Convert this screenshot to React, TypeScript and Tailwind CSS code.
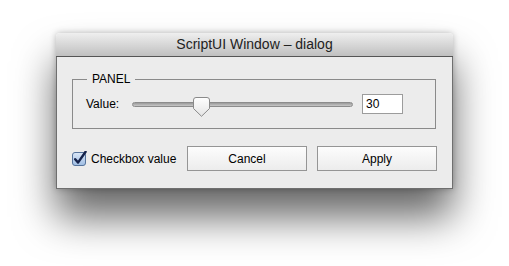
import React from "react";

function SliderThumb() {
  return (
    <svg width="17" height="20" viewBox="0 0 17 20" className="absolute left-[60px] top-[-6px]">
      <defs>
        <linearGradient id="thumb" x1="0" y1="0" x2="0" y2="1">
          <stop offset="0" stopColor="#ffffff" />
          <stop offset="1" stopColor="#e4e4e4" />
        </linearGradient>
      </defs>
      <path
        d="M3 0.5 H14 Q16.5 0.5 16.5 3 V11.5 L8.5 19.3 L0.5 11.5 V3 Q0.5 0.5 3 0.5 Z"
        fill="url(#thumb)"
        stroke="#8a8a8a"
        strokeWidth="1"
      />
    </svg>
  );
}

function CheckIcon() {
  return (
    <svg width="16" height="16" viewBox="0 0 16 16">
      <defs>
        <linearGradient id="box" x1="0" y1="0" x2="0" y2="1">
          <stop offset="0" stopColor="#dbe7f7" />
          <stop offset="1" stopColor="#9fbde3" />
        </linearGradient>
      </defs>
      <rect x="0.5" y="1.5" width="13" height="13" rx="2.5" fill="url(#box)" stroke="#56739b" />
      <path d="M3.2 8.2 L6 11.6 L13.6 0.8" fill="none" stroke="#15224a" strokeWidth="2.4" strokeLinecap="round" strokeLinejoin="round" />
    </svg>
  );
}

export default function App() {
  return (
    <div className="w-[509px] h-[266px] bg-white pt-[33px] pl-[56px] font-['Liberation_Sans',Arial,sans-serif] text-black">
      <div className="w-[397px] rounded-t-[4px] shadow-[0_0_6px_rgba(0,0,0,0.25),0_28px_40px_0_rgba(0,0,0,0.6)]">
        <div className="h-[24px] rounded-t-[4px] bg-gradient-to-b from-[#efefef] to-[#c0c0c0] border-b border-[#555] flex items-center justify-center text-[14px] text-[#222]">
          ScriptUI Window – dialog
        </div>
        <div className="bg-[#ececec] border-x border-b border-[#6f6f6f] pt-[22px] pb-[17px] px-[15px]">
          <div className="relative w-[364px] h-[50px] border border-[#8a8a8a] flex items-center pl-[13px]">
            <span className="absolute left-[14px] top-[-8px] bg-[#ececec] px-[5px] text-[12px] leading-[14px]">
              PANEL
            </span>
            <span className="text-[12px] w-[46px] mt-[-1px]">Value:</span>
            <div className="relative w-[221px] h-[5px] rounded-full bg-gradient-to-b from-[#9a9a9a] to-[#c8c8c8] border border-[#8c8c8c]">
              <SliderThumb />
            </div>
            <div className="ml-[9px] w-[41px] h-[20px] bg-white border border-[#9c9c9c] text-[12px] pl-[3px] leading-[18px]">
              30
            </div>
          </div>
          <div className="flex items-center mt-[17px]">
            <div className="flex items-center w-[115px] text-[12px]">
              <CheckIcon />
              <span className="ml-[3px]">Checkbox value</span>
            </div>
            <button className="w-[120px] h-[25px] border border-[#959595] bg-gradient-to-b from-[#fdfdfd] to-[#ececec] text-[12px]">
              Cancel
            </button>
            <button className="ml-[10px] w-[120px] h-[25px] border border-[#959595] bg-gradient-to-b from-[#fdfdfd] to-[#ececec] text-[12px]">
              Apply
            </button>
          </div>
        </div>
      </div>
    </div>
  );
}
